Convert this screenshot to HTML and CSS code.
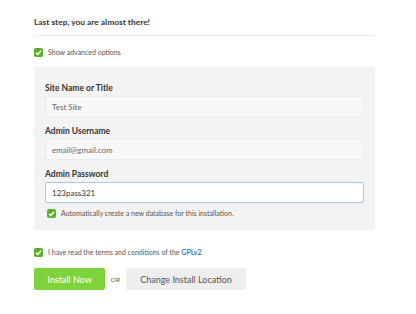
FILE: index.html
```html
<!DOCTYPE html>
<html lang="en">
<head>
    <meta charset="UTF-8">
    <title>Install</title>
    <link rel="stylesheet" href="styles.css">
</head>
<body>
    <div class="install">
        <h2 class="step-title">Last step, you are almost there!</h2>

        <label class="check">
            <span class="box"><svg viewBox="0 0 10 10"><path d="M2.2 5.2 L4.2 7.1 L7.9 3" /></svg></span>
            <span>Show advanced options</span>
        </label>

        <!-- Advanced options -->
        <div class="advanced">
            <div class="field">
                <div class="field-label">Site Name or Title</div>
                <div class="input">Test Site</div>
            </div>
            <div class="field">
                <div class="field-label">Admin Username</div>
                <div class="input">email@gmail.com</div>
            </div>
            <div class="field">
                <div class="field-label">Admin Password</div>
                <div class="input active">123pass321</div>
            </div>
            <label class="check small">
                <span class="box"><svg viewBox="0 0 10 10"><path d="M2.2 5.2 L4.2 7.1 L7.9 3" /></svg></span>
                <span>Automatically create a new database for this installation.</span>
            </label>
        </div>

        <label class="check terms">
            <span class="box"><svg viewBox="0 0 10 10"><path d="M2.2 5.2 L4.2 7.1 L7.9 3" /></svg></span>
            <span>I have read the terms and conditions of the <a href="#">GPLv2</a></span>
        </label>

        <div class="actions">
            <button class="btn btn-green">Install Now</button>
            <span class="or">OR</span>
            <button class="btn btn-gray">Change Install Location</button>
        </div>
    </div>
</body>
</html>
```

FILE: styles.css
```css
* {
    margin: 0;
    padding: 0;
    box-sizing: border-box;
}

body {
    font-family: 'Lato', sans-serif;
    background: #fff;
    color: #444;
}

.install {
    width: 341px;
    margin-left: 34px;
    padding-top: 17px;
}

.step-title {
    font-size: 8.4px;
    line-height: 11px;
    font-weight: bold;
    color: #333;
    padding-bottom: 7px;
    border-bottom: 1px solid #eee;
}

/* Checkboxes */
.check {
    display: flex;
    align-items: center;
    gap: 5px;
    font-size: 7px;
    line-height: 10px;
    color: #555;
    margin-top: 11px;
}

.box {
    width: 9px;
    height: 9px;
    border-radius: 2px;
    background: #5bb02a;
    display: flex;
}

.box svg {
    width: 9px;
    height: 9px;
}

.box path {
    fill: none;
    stroke: #fff;
    stroke-width: 1.6;
}

/* Gray panel */
.advanced {
    background: #f3f3f3;
    margin-top: 10px;
    padding: 16px 11px 12px 11px;
}

.field {
    margin-bottom: 9px;
}

.field-label {
    font-size: 8.5px;
    line-height: 11px;
    font-weight: bold;
    color: #333;
    margin-bottom: 2px;
}

.input {
    height: 21px;
    background: #f8f8f8;
    border: 1px solid #ececec;
    border-radius: 2px;
    font-size: 8px;
    color: #666;
    padding: 0 6px;
    display: flex;
    align-items: center;
}

.input.active {
    background: #fff;
    border-color: #a9c9e8;
    color: #333;
}

.check.small {
    margin-top: -4px;
    margin-left: 2px;
    gap: 5px;
}

.check.terms {
    margin-top: 17px;
}

.terms a {
    color: #3a7bbf;
    font-weight: bold;
    text-decoration: none;
}

/* Buttons */
.actions {
    display: flex;
    align-items: center;
    margin-top: 11px;
}

.btn {
    border: none;
    border-radius: 2px;
    height: 22px;
    font-family: 'Lato', sans-serif;
    font-size: 9px;
}

.btn-green {
    background: #7ed23a;
    color: #fff;
    width: 71px;
}

.btn-gray {
    background: #eeeeee;
    color: #555;
    width: 120px;
}

.or {
    font-size: 6.5px;
    color: #555;
    width: 21px;
    text-align: center;
}
```
